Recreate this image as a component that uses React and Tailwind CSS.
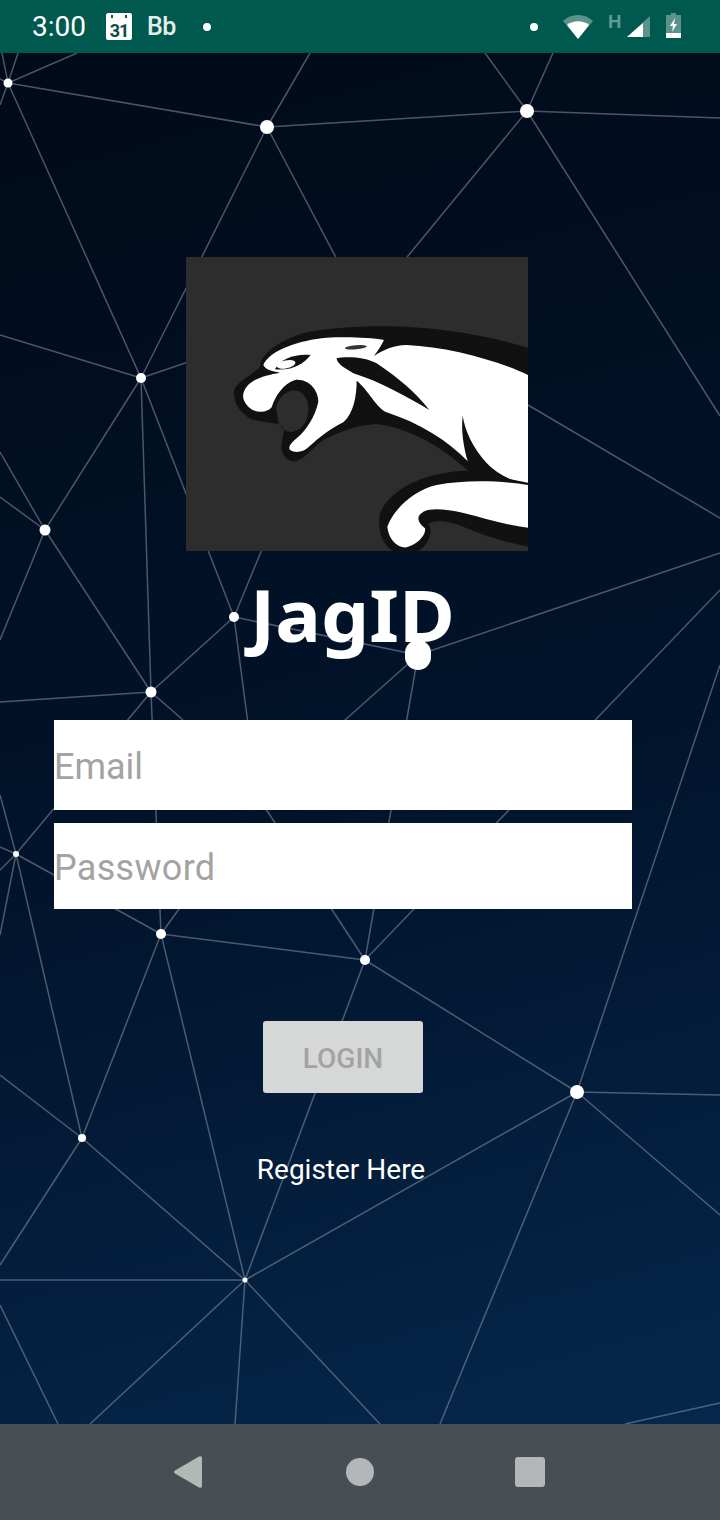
const NODES = {
  A: [8, 83, 4.5], B: [267, 127, 7], C: [527, 111, 7], D: [141, 378, 5], E: [45, 530, 5.5], F: [234, 617, 5],
  H: [151, 692, 5.5], I: [16, 854, 3], J: [161, 934, 5], K: [365, 960, 5], L: [577, 1092, 7], M: [82, 1138, 4], N: [245, 1280, 2.5],
};
const G = [418, 655];
const P = (k) => (k === "G" ? G : NODES[k].slice(0, 2));
const LINES = [
  ["A", "B"], ["B", "C"], ["C", [720, 118]], ["A", [77, 53]], ["A", [18, 53]], ["A", [2, 53]], ["A", [0, 79]], ["A", [0, 105]], ["A", "D"], ["B", "D"], ["B", [310, 53]], ["B", [406, 390]],
  ["C", [380, 290]], ["C", [485, 53]], ["C", [553, 53]], ["C", [720, 416]], ["D", [0, 335]], ["D", [200, 358]], ["D", "E"], ["D", "H"], ["D", "F"],
  ["E", [0, 452]], ["E", [0, 497]], ["E", "H"], ["E", [0, 640]], ["F", [270, 530]], ["F", "H"], ["F", "G"], ["F", [258, 800]],
  ["G", [720, 553]], [[418, 655], [345, 720]], [[345, 720], [252, 810]], [[241, 823], "J"], ["G", "K"], ["K", [720, 590]], ["K", [260, 800]],
  ["H", [0, 702]], ["H", [183, 720]], ["H", "J"], ["H", "I"], ["I", [0, 935]], ["I", [0, 795]], ["I", [0, 847]], ["I", [0, 870]], ["I", "M"], ["I", "J"], ["J", "K"], ["J", "M"], ["J", "N"],
  ["K", "L"], ["K", "N"], ["L", [720, 1095]], ["L", [720, 1215]], ["L", "N"], ["L", [440, 1424]], ["L", [720, 665]], ["M", [0, 1075]], ["M", [0, 1265]],
  ["M", "N"], ["N", [0, 1280]], ["N", [90, 1424]], ["N", [235, 1424]], ["N", [380, 1424]], [[0, 1305], [58, 1424]], [[625, 1424], [720, 1403]], [[528, 405], [720, 518]],
];
const pt = (p) => (typeof p === "string" ? P(p) : p);

function Network() {
  return (
    <svg className="absolute left-0 top-[-53px] pointer-events-none" width="720" height="1477" viewBox="0 0 720 1477">
      <g stroke="#8794a6" strokeOpacity="0.55" strokeWidth="1.5">
        {LINES.map(([a, b], i) => {
          const [x1, y1] = pt(a);
          const [x2, y2] = pt(b);
          return <line key={i} x1={x1} y1={y1} x2={x2} y2={y2} />;
        })}
      </g>
      <g fill="#fff">
        {Object.values(NODES).map(([x, y, r], i) => (
          <circle key={i} cx={x} cy={y} r={r} />
        ))}
      </g>
    </svg>
  );
}

function Logo() {
  return (
    <svg width="342" height="294" viewBox="18 21 1026 882" className="block">
      <rect x="18" y="21" width="1026" height="882" fill="#2d2d2d" />
      <path fill="#111" d="M162 425C165 400 200 385 240 352C240 315 290 275 370 250C450 230 600 225 700 232C830 240 950 265 1044 293L1044 700L872 668C810 615 720 540 590 522C530 525 480 545 430 570C400 590 375 630 340 635C315 630 300 605 305 580L312 540L295 522C260 515 215 515 195 495C175 480 160 450 162 425Z" />
      <path fill="#2d2d2d" d="M288 475C295 435 330 415 355 423C385 435 392 480 378 512C365 540 340 550 318 543L312 538L296 522Z" />
      <path fill="#fff" d="M250 345C268 300 360 270 440 263C500 260 570 262 612 270C605 285 595 300 582 318C610 300 640 285 680 285C800 290 950 330 1044 375L1044 700C990 695 950 670 920 640L865 635C800 570 720 520 620 487C590 475 565 420 530 392C530 440 520 490 490 517C450 537 420 560 385 592C370 607 345 610 330 600C323 590 335 578 350 565C380 540 405 500 415 455C415 420 385 385 345 390C310 400 285 440 275 472C260 490 225 490 205 470C185 450 185 430 200 410C220 385 260 375 300 368C285 365 258 362 250 345Z" />
      <path fill="#111" d="M470 325C500 318 560 322 590 340C650 380 710 430 748 480C680 440 600 395 520 370C490 352 470 340 470 325Z" />
      <path fill="#111" d="M848 497C855 540 875 590 925 645L865 640C850 590 843 540 848 497Z" />
      <path fill="#111" d="M285 358C300 325 350 310 392 315C370 342 340 362 285 358Z" />
      <ellipse cx="318" cy="343" rx="29" ry="12" transform="rotate(-12 318 343)" fill="#fff" />
      <ellipse cx="528" cy="292" rx="33" ry="6" transform="rotate(-5 528 292)" fill="#333" />
      <path fill="#111" d="M1044 698L860 662C760 665 640 700 600 790C590 840 610 890 640 903L715 903C750 880 760 845 745 822C760 810 800 810 850 830C920 860 990 880 1044 890Z" />
      <path fill="#fff" d="M1044 705C950 690 850 690 770 705C700 720 640 780 622 830C625 865 650 895 680 892C710 885 740 855 735 835C715 820 705 800 730 785C770 765 860 790 930 810C970 820 1010 830 1044 833Z" />
    </svg>
  );
}

function StatusBar() {
  return (
    <div className="h-[53px] shrink-0 bg-[#00594e] flex items-center text-white font-['Roboto',sans-serif] relative z-10">
      <span className="ml-[32px] w-[54px] text-[28px] leading-none whitespace-nowrap">3:00</span>
      <div className="ml-[20px] w-[26px] h-[27px] bg-white rounded-[2px] flex items-end justify-center relative">
        <div className="absolute top-[2px] left-[5px] w-[2px] h-[3px] bg-[#00594e]" />
        <div className="absolute top-[2px] right-[5px] w-[2px] h-[3px] bg-[#00594e]" />
        <span className="text-[18px] leading-[19px] font-bold text-[#0b4c43] tracking-[-1px]">31</span>
      </div>
      <span className="ml-[15px] w-[31px] text-[25px] leading-none text-[#e4eeec] font-medium tracking-[-0.5px]">Bb</span>
      <div className="ml-[25px] w-[8px] h-[8px] rounded-full bg-white" />
      <div className="ml-[319px] w-[8px] h-[8px] rounded-full bg-white" />
      <svg className="ml-[25px]" width="30" height="24" viewBox="0 0 30 24">
        <path d="M0 6C8-2 22-2 30 6L15 24Z" fill="#fff" fillOpacity="0.35" />
        <path d="M4 10C10 5 20 5 26 10L15 24Z" fill="#fff" />
      </svg>
      <span className="ml-[15px] mt-[-10px] w-[15px] text-[19px] leading-none font-bold text-[#5d9a91]">H</span>
      <svg className="ml-[4px]" width="23" height="21" viewBox="0 0 23 21">
        <path d="M23 0V21H0Z" fill="#fff" fillOpacity="0.35" />
        <path d="M16 7V21H0Z" fill="#fff" />
      </svg>
      <svg className="ml-[16px] mt-[-2px]" width="15" height="25" viewBox="0 0 15 25">
        <path d="M5 0H10V2H15V25H0V2H5Z" fill="#fff" fillOpacity="0.35" />
        <path d="M0 20H15V25H0Z" fill="#fff" />
        <path d="M9 5L4 13H7L6 19L11 11H8Z" fill="#fff" />
      </svg>
    </div>
  );
}

function NavBar() {
  return (
    <div className="h-[96px] shrink-0 bg-[#474e54] flex items-center pl-[174px] pb-[1px] relative z-10">
      <svg width="28" height="32" viewBox="0 0 28 32">
        <path d="M1 14.5L25 0.5Q28 -0.5 28 2V30Q28 32.5 25 31.5L1 17.5Q-1 16 1 14.5Z" fill="#b3b7b8" />
      </svg>
      <div className="ml-[144px] w-[28px] h-[28px] rounded-full bg-[#b3b7b8]" />
      <div className="ml-[141px] w-[30px] h-[30px] rounded-[3px] bg-[#b3b7b8]" />
    </div>
  );
}

export default function App() {
  return (
    <div className="w-[720px] h-[1520px] flex flex-col overflow-hidden font-['Roboto',sans-serif]">
      <StatusBar />
      <main className="relative flex-1 overflow-hidden bg-[linear-gradient(165deg,#010a18_0%,#01142c_55%,#06274b_100%)]">
        <Network />
        <div className="relative">
          <div className="pt-[204px] pl-[186px]">
            <Logo />
          </div>
          <div className="relative h-[169px] pt-[18px]">
            <h1 className="ml-[250px] w-fit origin-left scale-x-[1.06] text-[72px] leading-[90px] font-bold text-white font-['Noto_Sans',sans-serif]">
              JagID
            </h1>
            <div className="absolute left-[405px] top-[89px] w-[26px] h-[30px] rounded-full bg-white" />
          </div>
          <div className="ml-[54px] w-[578px] flex flex-col">
            <input
              placeholder="Email"
              className="h-[90px] w-full bg-white pt-[3px] text-[36px] outline-none placeholder:text-[#a3a3a3]"
            />
            <input
              placeholder="Password"
              className="mt-[13px] h-[86px] w-full bg-white pt-[3px] text-[36px] tracking-[0.3px] outline-none placeholder:text-[#a3a3a3]"
            />
            <button
              disabled
              className="mt-[112px] mx-auto w-[160px] h-[72px] pt-[3px] rounded-[3px] bg-[#d6d7d7] text-[#a3a3a3] text-[28px] font-medium"
            >
              LOGIN
            </button>
            <p className="mt-[59px] text-center text-[28px] leading-[36px] text-white pr-[4px]">Register Here</p>
          </div>
        </div>
      </main>
      <NavBar />
    </div>
  );
}
